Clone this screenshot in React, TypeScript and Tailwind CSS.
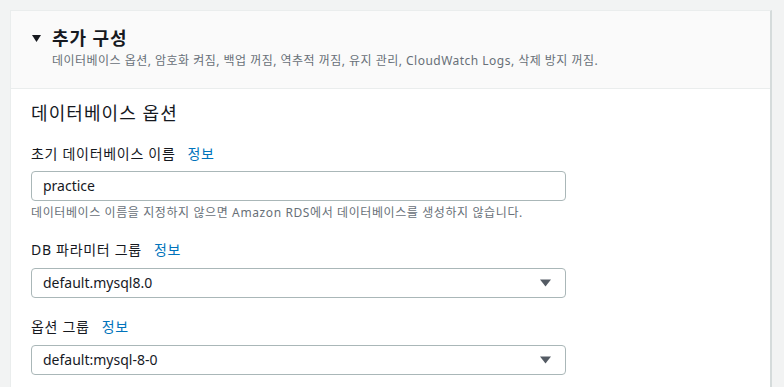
const font = { fontFamily: '"Noto Sans", "Noto Sans CJK KR", sans-serif' }

function Label({ text }: { text: string }) {
  return (
    <div className="flex items-center gap-3 text-sm leading-5 text-[#16191f] tracking-[0.05em]">
      <span>{text}</span>
      <a className="text-[#0073bb] cursor-pointer">정보</a>
    </div>
  )
}

function Select({ value }: { value: string }) {
  return (
    <div className="w-[535px] h-[30px] mt-2 flex items-center justify-between pl-[11px] pr-[14px] border border-[#aab7b8] rounded-sm bg-white text-sm text-[#16191f]">
      <span>{value}</span>
      <svg width="11" height="8" viewBox="0 0 11 8">
        <path d="M0 0.5H11L5.5 7.5Z" fill="#545b64" />
      </svg>
    </div>
  )
}

export default function App() {
  return (
    <div className="h-[387px] bg-[#f2f3f3] pt-[10px] pl-[10px] overflow-hidden" style={font}>
      <div className="w-[762px] h-[400px] bg-white border-t border-l border-[#eaeded] border-r-2 border-r-[#d5dbdb]">
        <div className="bg-[#fafafa] border-b border-[#eaeded] pl-[21px] pt-[16px] pb-[19px]">
          <div className="flex items-center gap-[11px]">
            <svg width="9" height="7" viewBox="0 0 9 7">
              <path d="M0 0H9L4.5 7Z" fill="#16191f" />
            </svg>
            <h2 className="text-lg leading-[22px] font-bold text-[#16191f] tracking-[0.05em]">추가 구성</h2>
          </div>
          <p className="mt-1 pl-5 text-xs leading-4 text-[#687078] tracking-[0.04em]">
            데이터베이스 옵션, 암호화 켜짐, 백업 꺼짐, 역추적 꺼짐, 유지 관리, CloudWatch Logs, 삭제 방지 꺼짐.
          </p>
        </div>
        <div className="pl-[20px] pt-[12px]">
          <h3 className="text-lg leading-6 text-[#16191f] tracking-[0.06em]">데이터베이스 옵션</h3>

          <div className="mt-[19px]">
            <Label text="초기 데이터베이스 이름" />
            <div className="w-[535px] h-[30px] mt-[7px] flex items-center pl-[11px] border border-[#aab7b8] rounded-sm text-sm text-[#16191f]">
              practice
            </div>
            <p className="mt-1 text-xs leading-4 text-[#687078] tracking-[0.05em]">
              데이터베이스 이름을 지정하지 않으면 Amazon RDS에서 데이터베이스를 생성하지 않습니다.
            </p>
          </div>

          <div className="mt-[19px]">
            <Label text="DB 파라미터 그룹" />
            <Select value="default.mysql8.0" />
          </div>

          <div className="mt-[19px]">
            <Label text="옵션 그룹" />
            <Select value="default:mysql-8-0" />
          </div>
        </div>
      </div>
    </div>
  )
}
